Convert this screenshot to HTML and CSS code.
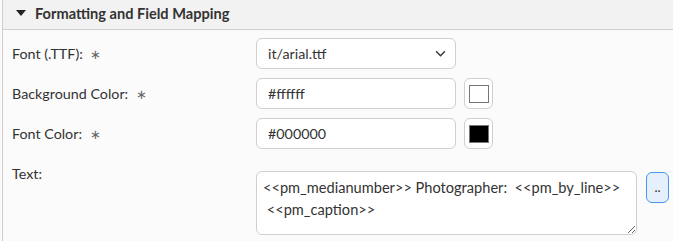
FILE: index.html
```html
<!DOCTYPE html>
<html lang="en">
<head>
  <meta charset="UTF-8" />
  <title>Formatting and Field Mapping</title>
  <link rel="stylesheet" href="styles.css">
</head>
<body>
  <div class="panel">
    <div class="panel-head">
      <span class="caret"></span>
      <span class="panel-title">Formatting and Field Mapping</span>
    </div>
    <div class="panel-body">
      <!-- Шрифт -->
      <div class="row">
        <label class="label">Font (.TTF): <span class="req">∗</span></label>
        <div class="controls">
          <div class="select">
            <span>it/arial.ttf</span>
            <svg class="chevron" viewBox="0 0 12 8" width="11" height="7">
              <path d="M1 1.5 L6 6.5 L11 1.5" fill="none" stroke="#333" stroke-width="1.6"/>
            </svg>
          </div>
        </div>
      </div>
      <div class="row">
        <label class="label">Background Color: <span class="req">∗</span></label>
        <div class="controls">
          <input class="input" type="text" value="#ffffff">
          <button class="swatch"><span class="swatch-box white"></span></button>
        </div>
      </div>
      <div class="row">
        <label class="label">Font Color: <span class="req">∗</span></label>
        <div class="controls">
          <input class="input" type="text" value="#000000">
          <button class="swatch"><span class="swatch-box black"></span></button>
        </div>
      </div>
      <!-- Текст -->
      <div class="row row-text">
        <label class="label">Text:</label>
        <div class="controls">
          <textarea class="textarea">&lt;&lt;pm_medianumber&gt;&gt; Photographer:  &lt;&lt;pm_by_line&gt;&gt;
 &lt;&lt;pm_caption&gt;&gt;</textarea>
          <button class="more">..</button>
        </div>
      </div>
    </div>
  </div>
</body>
</html>
```

FILE: styles.css
```css
:root {
  --border: #cfcfcf;
  --text: #333;
  --head-bg: #f2f2f2;
  --body-bg: #fbfbfb;
}
* { box-sizing: border-box; }
body {
  margin: 0;
  font-family: 'Lato', 'Open Sans', sans-serif;
  font-size: 14px;
  color: var(--text);
  background: var(--body-bg);
}
.panel {
  margin-left: 2px;
  border-left: 1px solid var(--border);
  min-height: 241px;
}
.panel-head {
  height: 30px;
  background: var(--head-bg);
  border-bottom: 1px solid var(--border);
  display: flex;
  align-items: center;
  padding-left: 13px;
  padding-bottom: 3px;
}
.caret {
  width: 0;
  height: 0;
  border-left: 5px solid transparent;
  border-right: 5px solid transparent;
  border-top: 6px solid #222;
  margin-right: 9px;
}
.panel-title {
  font-weight: 700;
  font-size: 14.6px;
  color: #333;
}
.panel-body {
  padding-top: 8px;
}
.row {
  display: grid;
  grid-template-columns: 253px 1fr;
  align-items: center;
  margin-bottom: 9px;
}
.label {
  padding-left: 9px;
  font-size: 14.3px;
}
.req {
  color: #666;
  margin-left: 4px;
  font-size: 13px;
}
.controls {
  display: flex;
  align-items: flex-start;
  gap: 8px;
}
.select, .input {
  width: 200px;
  height: 31px;
  border: 1px solid var(--border);
  border-radius: 6px;
  background: #fff;
  font-family: inherit;
  font-size: 14.3px;
  color: var(--text);
  padding: 0 11px;
}
.select {
  display: flex;
  align-items: center;
  justify-content: space-between;
  padding-right: 9px;
}
.input { outline: none; }
.swatch {
  width: 29px;
  height: 31px;
  border: 1px solid var(--border);
  border-radius: 6px;
  background: #fff;
  padding: 0;
  display: flex;
  align-items: center;
  justify-content: center;
}
.swatch-box {
  width: 20px;
  height: 18px;
  border: 1px solid #777;
}
.swatch-box.white { background: #fff; }
.swatch-box.black { background: #000; }
/* Строка с текстом */
.row-text {
  align-items: start;
  margin-top: 22px;
}
.row-text .label {
  margin-top: -6px;
}
.row-text .controls { gap: 9px; }
.textarea {
  width: 381px;
  height: 64px;
  border: 1px solid var(--border);
  border-radius: 6px;
  background: #fff;
  font-family: inherit;
  font-size: 14.6px;
  line-height: 22px;
  color: var(--text);
  padding: 5px 6px;
  resize: vertical;
  overflow: hidden;
}
.more {
  width: 23px;
  height: 31px;
  margin-top: 1px;
  border: 1px solid #4a97f0;
  border-radius: 6px;
  background: #e6f0fd;
  color: #333;
  font-family: inherit;
  font-size: 13px;
  padding: 0;
  line-height: 1;
}
```
